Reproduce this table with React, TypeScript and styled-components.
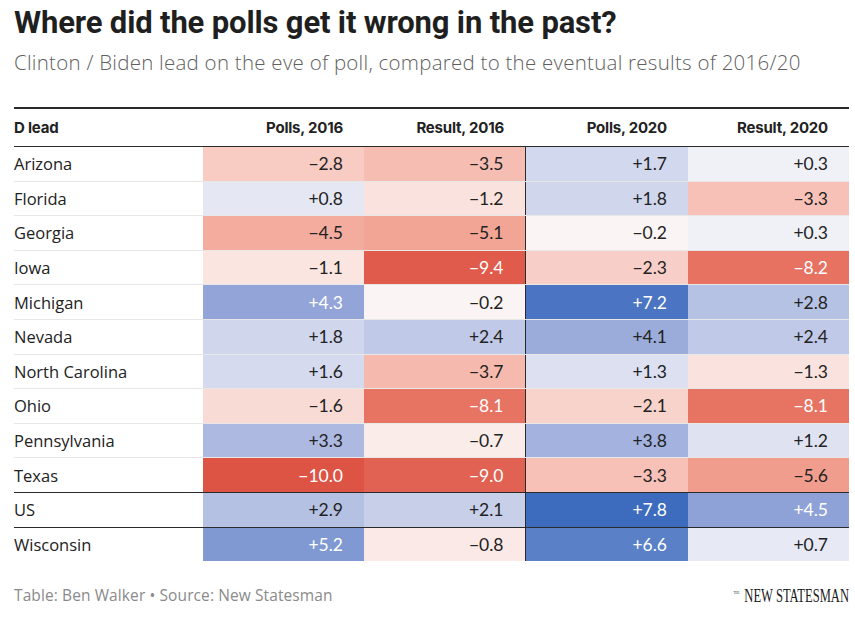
import React from "react";
import styled, { createGlobalStyle } from "styled-components";

const Global = createGlobalStyle`
  html, body { margin: 0; padding: 0; background: #fff; }
  body { font-family: "Lato", "Liberation Sans", sans-serif; color: #222; }
`;

const Page = styled.div`
  width: 855px;
  height: 620px;
  box-sizing: border-box;
  padding: 4px 6px 0 14px;
  display: flex;
  flex-direction: column;
`;

const Title = styled.h1`
  margin: 0;
  font-family: "Roboto", "Liberation Sans", sans-serif;
  font-weight: 700;
  font-size: 31px;
  line-height: 38px;
  letter-spacing: -0.15px;
  color: #1f1f1f;
`;

const Subtitle = styled.p`
  margin: 7px 0 0 0;
  font-family: "Open Sans", "Liberation Sans", sans-serif;
  font-weight: 300;
  font-size: 20.5px;
  line-height: 26px;
  letter-spacing: 0.25px;
  color: #5f5f5f;
`;

const Table = styled.table`
  margin-top: 32px;
  width: 835px;
  border-collapse: collapse;
  table-layout: fixed;
  border-top: 2px solid #2a2a2a;
`;

const HeadCell = styled.th<{ $align: "left" | "right" }>`
  height: 37px;
  padding: 0 ${(p) => (p.$align === "right" ? "21px" : "0")} 0 0;
  text-align: ${(p) => p.$align};
  font-family: "Inter", "Liberation Sans", sans-serif;
  font-weight: 700;
  font-size: 15px;
  letter-spacing: -0.2px;
  color: #222;
  border-bottom: 1.5px solid #2a2a2a;
  vertical-align: middle;
`;

const Row = styled.tr<{ $heavy: boolean; $last: boolean }>`
  & > td {
    border-bottom: ${(p) =>
      p.$last ? "none" : p.$heavy ? "1.5px solid #2a2a2a" : "1px solid #e7e7e7"};
  }
`;

const StateCell = styled.td`
  height: 33.6px;
  padding: 0;
  font-family: "Open Sans", "Liberation Sans", sans-serif;
  font-size: 16.5px;
  color: #222;
  vertical-align: middle;
`;

const ValueCell = styled.td<{ $bg: string; $light: boolean; $divider: boolean }>`
  height: 33.6px;
  padding: 0 21px 0 0;
  text-align: right;
  background: ${(p) => p.$bg};
  color: ${(p) => (p.$light ? "#ffffff" : "#222")};
  font-family: "Lato", "Liberation Sans", sans-serif;
  font-size: 17.5px;
  vertical-align: middle;
  border-right: ${(p) => (p.$divider ? "1.5px solid #2a2a2a" : "none")};
`;

const Footer = styled.div`
  margin-top: 23px;
  display: flex;
  justify-content: space-between;
  align-items: center;
`;

const Credit = styled.span`
  font-family: "Open Sans", "Liberation Sans", sans-serif;
  font-size: 15.5px;
  letter-spacing: 0.1px;
  color: #8a8a8a;
`;

const Logo = styled.svg`
  display: block;
`;

type Cell = [number, string];
type RowData = { name: string; cells: Cell[] };

const rows: RowData[] = [
  { name: "Arizona", cells: [[-2.8, "#f8cbc3"], [-3.5, "#f6bdb2"], [1.7, "#d2d8ed"], [0.3, "#eff1f7"]] },
  { name: "Florida", cells: [[0.8, "#e5e8f3"], [-1.2, "#fae3df"], [1.8, "#d0d6ec"], [-3.3, "#f7c1b7"]] },
  { name: "Georgia", cells: [[-4.5, "#f4ac9f"], [-5.1, "#f2a495"], [-0.2, "#faf5f4"], [0.3, "#eff1f7"]] },
  { name: "Iowa", cells: [[-1.1, "#fbe5e1"], [-9.4, "#e05b4b"], [-2.3, "#f8cfc8"], [-8.2, "#e77262"]] },
  { name: "Michigan", cells: [[4.3, "#93a5d8"], [-0.2, "#faf5f4"], [7.2, "#4b74c2"], [2.8, "#b6c2e4"]] },
  { name: "Nevada", cells: [[1.8, "#d0d6ec"], [2.4, "#c0c9e7"], [4.1, "#9bacdb"], [2.4, "#c0c9e7"]] },
  { name: "North Carolina", cells: [[1.6, "#d5daee"], [-3.7, "#f6b9ae"], [1.3, "#dce0f1"], [-1.3, "#fae2de"]] },
  { name: "Ohio", cells: [[-1.6, "#f9dbd6"], [-8.1, "#e77363"], [-2.1, "#f8d3cc"], [-8.1, "#e77363"]] },
  { name: "Pennsylvania", cells: [[3.3, "#adb9e1"], [-0.7, "#faece9"], [3.8, "#a3b2de"], [1.2, "#dfe2f1"]] },
  { name: "Texas", cells: [[-10.0, "#dd5445"], [-9.0, "#e16252"], [-3.3, "#f7c1b7"], [-5.6, "#f09d8e"]] },
  { name: "US", cells: [[2.9, "#b5c1e3"], [2.1, "#c8cfe9"], [7.8, "#3d6cbf"], [4.5, "#8fa2d7"]] },
  { name: "Wisconsin", cells: [[5.2, "#8199d2"], [-0.8, "#fae9e6"], [6.6, "#5a80c7"], [0.7, "#e7eaf4"]] },
];

const headers = ["Polls, 2016", "Result, 2016", "Polls, 2020", "Result, 2020"];
const widths = [189, 161, 161, 163, 161];

const fmt = (v: number) => (v < 0 ? "\u2212" : "+") + Math.abs(v).toFixed(1);
const isLight = (v: number) => v >= 4.2 || v <= -8;

export default function App() {
  return (
    <>
      <Global />
      <Page>
        <Title>Where did the polls get it wrong in the past?</Title>
        <Subtitle>
          Clinton / Biden lead on the eve of poll, compared to the eventual results of 2016/20
        </Subtitle>
        <Table>
          <colgroup>
            {widths.map((w, i) => (
              <col key={i} style={{ width: w }} />
            ))}
          </colgroup>
          <thead>
            <tr>
              <HeadCell $align="left">D lead</HeadCell>
              {headers.map((h) => (
                <HeadCell key={h} $align="right">
                  {h}
                </HeadCell>
              ))}
            </tr>
          </thead>
          <tbody>
            {rows.map((r, ri) => (
              <Row
                key={r.name}
                $heavy={r.name === "Texas" || r.name === "US"}
                $last={ri === rows.length - 1}
              >
                <StateCell>{r.name}</StateCell>
                {r.cells.map(([v, bg], ci) => (
                  <ValueCell key={ci} $bg={bg} $light={isLight(v)} $divider={ci === 1}>
                    {fmt(v)}
                  </ValueCell>
                ))}
              </Row>
            ))}
          </tbody>
        </Table>
        <Footer>
          <Credit>Table: Ben Walker • Source: New Statesman</Credit>
          <Logo width="120" height="22" viewBox="0 0 120 22">
            <g transform="translate(4.5 10) scale(0.6 1)">
              <text x="0" y="0" fontFamily="Liberation Serif, serif" fontSize="5" fill="#222">
                THE
              </text>
            </g>
            <g transform="translate(120 18) scale(0.7 1)">
              <text
                x="0"
                y="0"
                textAnchor="end"
                fontFamily="Liberation Serif, serif"
                fontSize="18"
                fill="#1a1a1a"
              >
                NEW STATESMAN
              </text>
            </g>
          </Logo>
        </Footer>
      </Page>
    </>
  );
}
